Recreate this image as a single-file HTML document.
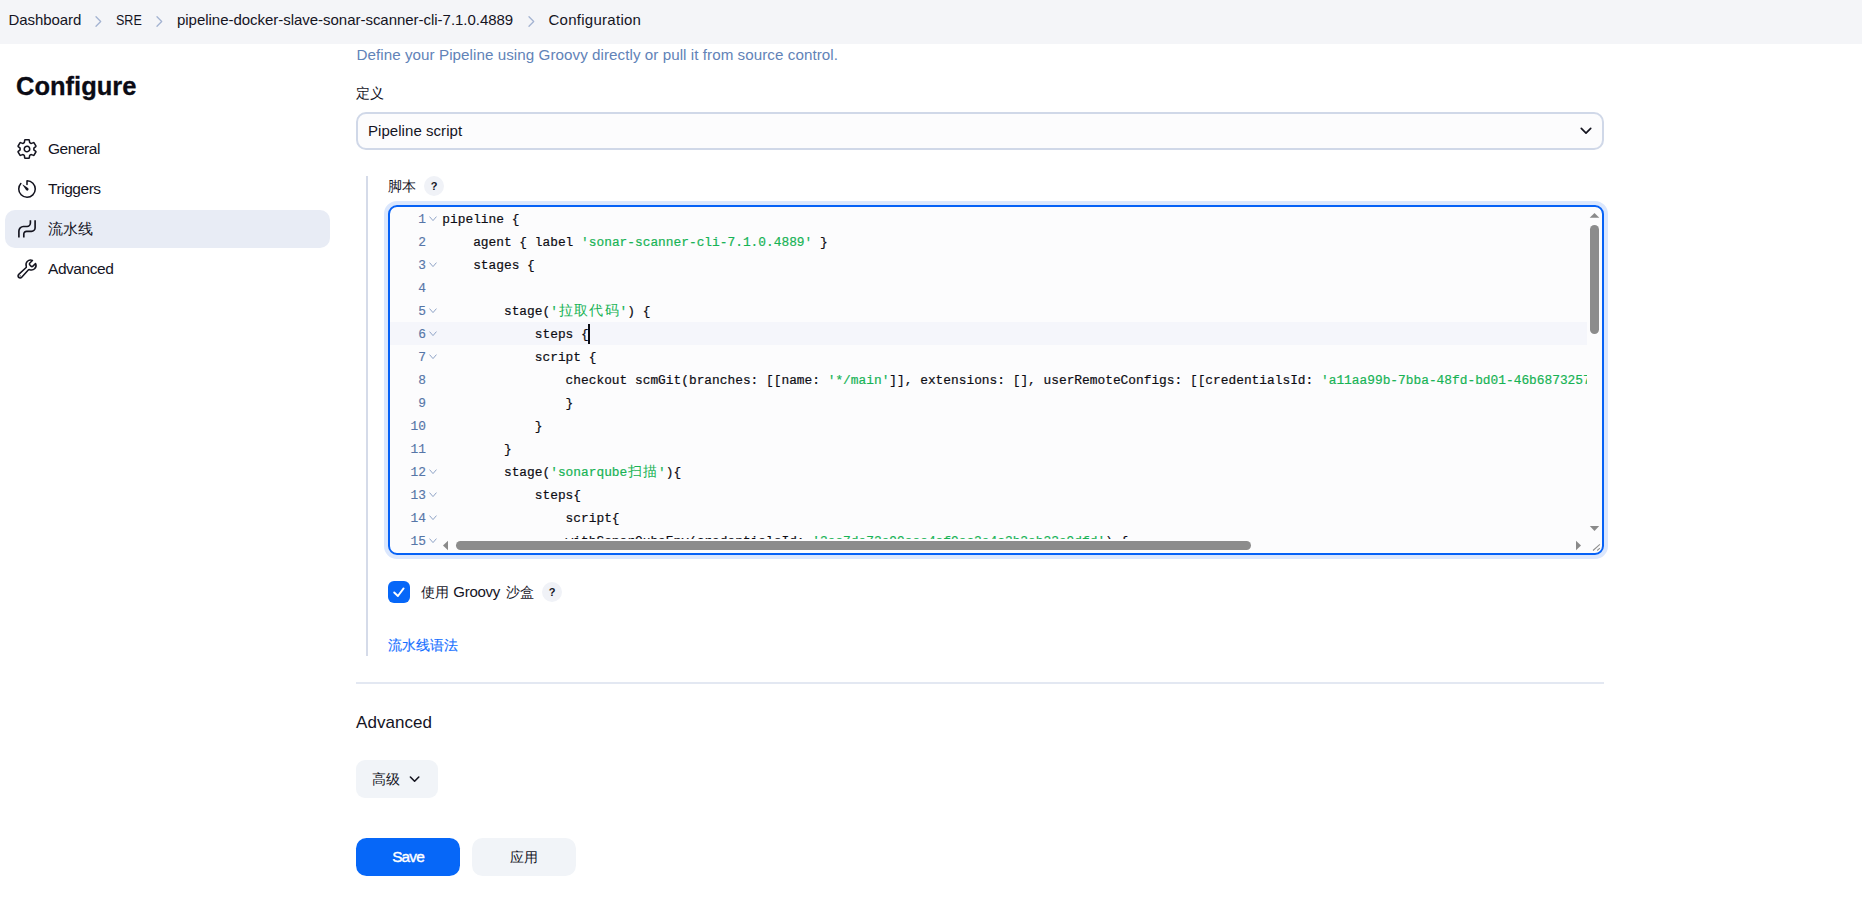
<!DOCTYPE html>
<html><head><meta charset="utf-8">
<style>
*{box-sizing:border-box;margin:0;padding:0}
html,body{width:1862px;height:900px;overflow:hidden;background:#fff;font-family:"Liberation Sans",sans-serif;color:#14141f}
.abs{position:absolute;white-space:nowrap}
#crumb{position:absolute;left:0;top:0;width:1862px;height:44px;background:#f4f5f8}
#crumb .t{position:absolute;top:0;line-height:39px;font-size:15px;color:#14141f;white-space:nowrap}
#crumb svg{position:absolute}
.side{position:absolute;left:48px;font-size:15.5px;line-height:20px;white-space:nowrap;letter-spacing:-0.45px}
.ico{position:absolute;left:16px;width:22px;height:22px}
.code{position:absolute;left:442.3px;font-family:"Liberation Mono",monospace;font-size:12.85px;line-height:23px;white-space:pre;color:#0d0d14;-webkit-text-stroke:0.2px}
.c{display:inline-block;width:15.42px;text-align:center;font-size:14px;line-height:18px;-webkit-text-stroke:0}
.ln{position:absolute;left:390px;width:36px;text-align:right;font-family:"Liberation Mono",monospace;font-size:12.85px;line-height:23px;color:#5676a8;-webkit-text-stroke:0.15px}
.s{color:#17b355}
.fold{position:absolute;left:428.5px;width:8px;height:6px}
.help{position:absolute;width:20px;height:20px;border-radius:10px;background:#f0f2f7;font-size:11px;font-weight:bold;text-align:center;line-height:20px;color:#14141f}
.cj{font-size:14px}
</style></head><body>
<div id="crumb">
 <span class="t" style="left:8.4px;letter-spacing:-0.05px">Dashboard</span>
 <svg style="left:94.4px;top:14.5px" width="9" height="13" viewBox="0 0 9 13"><path d="M2 1.8 L6.7 6.5 L2 11.2" fill="none" stroke="#a3b3d1" stroke-width="1.3" stroke-linecap="round" stroke-linejoin="round"/></svg>
 <span class="t" style="left:116px;display:inline-block;transform:scaleX(0.835);transform-origin:0 50%">SRE</span>
 <svg style="left:154.7px;top:14.5px" width="9" height="13" viewBox="0 0 9 13"><path d="M2 1.8 L6.7 6.5 L2 11.2" fill="none" stroke="#a3b3d1" stroke-width="1.3" stroke-linecap="round" stroke-linejoin="round"/></svg>
 <span class="t" style="left:177px;letter-spacing:-0.03px">pipeline-docker-slave-sonar-scanner-cli-7.1.0.4889</span>
 <svg style="left:526.7px;top:14.5px" width="9" height="13" viewBox="0 0 9 13"><path d="M2 1.8 L6.7 6.5 L2 11.2" fill="none" stroke="#a3b3d1" stroke-width="1.3" stroke-linecap="round" stroke-linejoin="round"/></svg>
 <span class="t" style="left:548.5px;letter-spacing:0.27px">Configuration</span>
</div>
<div class="abs" id="h1" style="left:16px;top:68px;font-size:25.5px;font-weight:bold;line-height:36px;color:#0b0b14;letter-spacing:0px;-webkit-text-stroke:0.3px #0b0b14">Configure</div>
<div style="position:absolute;left:5px;top:210.3px;width:325px;height:37.6px;border-radius:10px;background:#e8ecf5"></div>
<svg class="ico" style="top:138px" viewBox="0 0 512 512"><path d="M262.29 192.31a64 64 0 1057.4 57.4 64.13 64.13 0 00-57.4-57.4zM416.39 256a154.34 154.34 0 01-1.53 20.79l45.21 35.46a10.81 10.81 0 012.45 13.75l-42.77 74a10.81 10.81 0 01-13.14 4.59l-44.9-18.08a16.11 16.11 0 00-15.17 1.75A164.48 164.48 0 01325 400.8a15.94 15.94 0 00-8.82 12.14l-6.73 47.89a11.08 11.08 0 01-10.68 9.17h-85.54a11.11 11.11 0 01-10.69-8.87l-6.72-47.82a16.07 16.07 0 00-9-12.22 155.3 155.3 0 01-21.46-12.57 16 16 0 00-15.11-1.71l-44.89 18.07a10.81 10.81 0 01-13.14-4.58l-42.77-74a10.8 10.8 0 012.45-13.75l38.21-30a16.05 16.05 0 006-14.08c-.36-4.17-.58-8.33-.58-12.5s.21-8.27.58-12.35a16 16 0 00-6.07-13.94l-38.19-30A10.81 10.81 0 0149.48 186l42.77-74a10.81 10.81 0 0113.14-4.59l44.9 18.08a16.11 16.11 0 0015.17-1.75A164.48 164.48 0 01187 111.2a15.94 15.94 0 008.82-12.14l6.73-47.89A11.08 11.08 0 01213.23 42h85.54a11.11 11.11 0 0110.69 8.87l6.72 47.82a16.07 16.07 0 009 12.22 155.3 155.3 0 0121.46 12.57 16 16 0 0015.11 1.71l44.89-18.07a10.81 10.81 0 0113.14 4.58l42.77 74a10.8 10.8 0 01-2.45 13.75l-38.21 30a16.05 16.05 0 00-6.05 14.08c.33 4.14.55 8.3.55 12.47z" fill="none" stroke="#14141f" stroke-width="36" stroke-linecap="round" stroke-linejoin="round"/></svg>
<svg class="ico" style="top:178px" viewBox="0 0 512 512"><path d="M112.91 128A191.85 191.85 0 0064 254c-1.18 106.35 85.65 193.8 192 194 106.2.2 192-85.83 192-192 0-104.54-83.55-189.61-187.5-192a4.36 4.36 0 00-4.5 4.37V152" fill="none" stroke="#14141f" stroke-width="36" stroke-linecap="round" stroke-linejoin="round"/><path d="M233.38 278.63l-79-113a8.13 8.13 0 0111.32-11.32l113 79a32.5 32.5 0 01-37.25 53.26 33.21 33.21 0 01-8.07-7.94z" fill="#14141f"/></svg>
<svg class="ico" style="top:218px" viewBox="0 0 22 22"><path d="M2.9 19.6 V13 a4.5 4.5 0 0 1 4.5 -4.5 H11 a3.4 3.4 0 0 0 3.4 -3.4 V2.2" fill="none" stroke="#14141f" stroke-width="1.65"/><path d="M7.8 19.6 V16 a2.7 2.7 0 0 1 2.7 -2.7 H15.5 a3.6 3.6 0 0 0 3.6 -3.6 V2.2" fill="none" stroke="#14141f" stroke-width="1.65"/></svg>
<svg class="ico" style="top:258px" viewBox="0 0 512 512"><path d="M393.87 190a32.1 32.1 0 01-45.25 0l-26.57-26.57a32.09 32.09 0 010-45.26L382.19 58a1 1 0 00-.3-1.64c-38.82-16.64-89.15-8.16-121.11 23.57-30.58 30.35-32.32 76-21.12 115.84a31.93 31.93 0 01-9.06 32.08L64 380a48.17 48.17 0 1068 68l153.86-167a31.93 31.93 0 0131.6-9.13c39.54 10.59 84.54 8.6 114.72-21.19 32.49-32 39.5-88.56 23.75-120.93a1 1 0 00-1.6-.26z" fill="none" stroke="#14141f" stroke-width="36" stroke-linecap="round" stroke-linejoin="round"/><circle cx="96" cy="416" r="16" fill="#14141f"/></svg>
<div class="side" style="top:139px">General</div>
<div class="side" style="top:179px">Triggers</div>
<div class="side" style="top:219px;letter-spacing:0;font-size:14.5px">流水线</div>
<div class="side" style="top:259px">Advanced</div>
<div class="abs" id="desc" style="left:356.5px;top:44.7px;font-size:15.2px;line-height:20px;color:#6283b8;letter-spacing:0.05px">Define your Pipeline using Groovy directly or pull it from source control.</div>
<div class="abs cj" style="left:356px;top:83px;line-height:20px">定义</div>
<div style="position:absolute;left:356px;top:112px;width:1248px;height:37.5px;border:2px solid #d0d8e8;border-radius:10px;background:#fcfcfd"></div>
<div class="abs" id="sel" style="left:368px;top:121px;font-size:15px;line-height:20px;letter-spacing:0.05px">Pipeline script</div>
<svg class="abs" style="left:1578.5px;top:125.5px" width="14" height="10" viewBox="0 0 14 10"><path d="M2.3 2.4 L7 7.1 L11.7 2.4" fill="none" stroke="#14141f" stroke-width="1.7" stroke-linecap="round" stroke-linejoin="round"/></svg>

<div style="position:absolute;left:366px;top:176px;width:2px;height:479.7px;background:#d5dbe9"></div>
<div class="abs cj" style="left:388px;top:176px;line-height:20px">脚本</div>
<div class="help" style="left:424px;top:176px">?</div>
<div id="ed" style="position:absolute;left:388px;top:205px;width:1216px;height:350px;border-radius:9px;background:#fcfcfd"></div>
<div style="position:absolute;left:390px;top:322px;width:1197px;height:23px;background:#f5f6fb"></div>
<div class="ln" style="top:208px">1</div>
<svg class="fold" style="top:215.5px" viewBox="0 0 8 6"><path d="M0.8 0.9 L4 4.6 L7.2 0.9" fill="none" stroke="#8fa3c6" stroke-width="1" stroke-linecap="round" stroke-linejoin="round"/></svg>
<div class="code" style="top:208px">pipeline {</div>
<div class="ln" style="top:231px">2</div>
<div class="code" style="top:231px">    agent { label <span class="s">'sonar-scanner-cli-7.1.0.4889'</span> }</div>
<div class="ln" style="top:254px">3</div>
<svg class="fold" style="top:261.5px" viewBox="0 0 8 6"><path d="M0.8 0.9 L4 4.6 L7.2 0.9" fill="none" stroke="#8fa3c6" stroke-width="1" stroke-linecap="round" stroke-linejoin="round"/></svg>
<div class="code" style="top:254px">    stages {</div>
<div class="ln" style="top:277px">4</div>
<div class="code" style="top:277px"></div>
<div class="ln" style="top:300px">5</div>
<svg class="fold" style="top:307.5px" viewBox="0 0 8 6"><path d="M0.8 0.9 L4 4.6 L7.2 0.9" fill="none" stroke="#8fa3c6" stroke-width="1" stroke-linecap="round" stroke-linejoin="round"/></svg>
<div class="code" style="top:300px">        stage(<span class="s">'<span class="c">拉</span><span class="c">取</span><span class="c">代</span><span class="c">码</span>'</span>) {</div>
<div class="ln" style="top:323px">6</div>
<svg class="fold" style="top:330.5px" viewBox="0 0 8 6"><path d="M0.8 0.9 L4 4.6 L7.2 0.9" fill="none" stroke="#8fa3c6" stroke-width="1" stroke-linecap="round" stroke-linejoin="round"/></svg>
<div class="code" style="top:323px">            steps {</div>
<div class="ln" style="top:346px">7</div>
<svg class="fold" style="top:353.5px" viewBox="0 0 8 6"><path d="M0.8 0.9 L4 4.6 L7.2 0.9" fill="none" stroke="#8fa3c6" stroke-width="1" stroke-linecap="round" stroke-linejoin="round"/></svg>
<div class="code" style="top:346px">            script {</div>
<div class="ln" style="top:369px">8</div>
<div class="code" style="top:369px">                checkout scmGit(branches: [[name: <span class="s">'*/main'</span>]], extensions: [], userRemoteConfigs: [[credentialsId: <span class="s">'a11aa99b-7bba-48fd-bd01-46b68732577</span></div>
<div class="ln" style="top:392px">9</div>
<div class="code" style="top:392px">                }</div>
<div class="ln" style="top:415px">10</div>
<div class="code" style="top:415px">            }</div>
<div class="ln" style="top:438px">11</div>
<div class="code" style="top:438px">        }</div>
<div class="ln" style="top:461px">12</div>
<svg class="fold" style="top:468.5px" viewBox="0 0 8 6"><path d="M0.8 0.9 L4 4.6 L7.2 0.9" fill="none" stroke="#8fa3c6" stroke-width="1" stroke-linecap="round" stroke-linejoin="round"/></svg>
<div class="code" style="top:461px">        stage(<span class="s">'sonarqube<span class="c">扫</span><span class="c">描</span>'</span>){</div>
<div class="ln" style="top:484px">13</div>
<svg class="fold" style="top:491.5px" viewBox="0 0 8 6"><path d="M0.8 0.9 L4 4.6 L7.2 0.9" fill="none" stroke="#8fa3c6" stroke-width="1" stroke-linecap="round" stroke-linejoin="round"/></svg>
<div class="code" style="top:484px">            steps{</div>
<div class="ln" style="top:507px">14</div>
<svg class="fold" style="top:514.5px" viewBox="0 0 8 6"><path d="M0.8 0.9 L4 4.6 L7.2 0.9" fill="none" stroke="#8fa3c6" stroke-width="1" stroke-linecap="round" stroke-linejoin="round"/></svg>
<div class="code" style="top:507px">                script{</div>
<div class="ln" style="top:530px">15</div>
<svg class="fold" style="top:537.5px" viewBox="0 0 8 6"><path d="M0.8 0.9 L4 4.6 L7.2 0.9" fill="none" stroke="#8fa3c6" stroke-width="1" stroke-linecap="round" stroke-linejoin="round"/></svg>
<div class="code" style="top:530px">                withSonarQubeEnv(credentialsId: <span class="s">'3ea7de72e99aaa4af9ac2e4c3b2ab23e9dfd'</span>) {</div>
<div style="position:absolute;left:588px;top:324px;width:2px;height:20px;background:#0d0d14"></div>
<div style="position:absolute;left:1587px;top:207px;width:15px;height:346px;background:#fcfcfd"></div>
<div style="position:absolute;left:438px;top:539px;width:1164px;height:14px;background:#fcfcfd"></div>
<div style="position:absolute;left:1604px;top:196px;width:258px;height:368px;background:#fff"></div>
<svg class="abs" style="left:1586px;top:207px" width="16" height="346" viewBox="0 0 16 346">
<path d="M3.7 10.8 L8.5 5.9 L13.3 10.8 Z" fill="#8a8a8a"/>
<rect x="4" y="18" width="9" height="109" rx="4.5" fill="#8c8c8c"/>
<path d="M3.8 319 L13.2 319 L8.5 324 Z" fill="#8a8a8a"/>
<path d="M7 343.5 L13.9 337.3 M11.2 343.5 L13.9 341.2" stroke="#8f8f8f" stroke-width="1.05" fill="none"/>
</svg>
<svg class="abs" style="left:438px;top:539px" width="1148" height="14" viewBox="0 0 1148 14">
<path d="M10 1.8 L5 6.5 L10 11.2 Z" fill="#8a8a8a"/>
<rect x="18" y="2" width="795" height="9" rx="4.5" fill="#8c8c8c"/>
<path d="M1138 1.8 L1143 6.5 L1138 11.2 Z" fill="#8a8a8a"/>
</svg>
<div style="position:absolute;left:384px;top:201px;width:1224px;height:358px;border:4px solid #dbe7fd;border-radius:13px"></div>
<div style="position:absolute;left:388px;top:205px;width:1216px;height:350px;border:2px solid #0561f6;border-radius:9px"></div>
<div style="position:absolute;left:388px;top:581px;width:22px;height:22px;border-radius:6px;background:#0667f8"></div>
<svg class="abs" style="left:388px;top:581px" width="22" height="22" viewBox="0 0 22 22"><path d="M6.2 11.5 L9.9 15 L15.6 7.4" fill="none" stroke="#fff" stroke-width="1.9" stroke-linecap="round" stroke-linejoin="round"/></svg>
<div class="abs cj" style="left:421px;top:582px;line-height:20px">使用</div>
<div class="abs" id="groovy" style="left:453.3px;top:582px;font-size:15px;line-height:20px;letter-spacing:-0.28px">Groovy</div>
<div class="abs cj" style="left:506px;top:582px;line-height:20px">沙盒</div>
<div class="help" style="left:542px;top:582px">?</div>
<div class="abs cj" style="left:388px;top:635px;line-height:20px;color:#1670ff;-webkit-text-stroke:0.15px">流水线语法</div>

<div style="position:absolute;left:356px;top:682px;width:1248px;height:2px;background:#e3e8f2"></div>
<div class="abs" id="adv" style="left:356px;top:710.6px;font-size:17px;line-height:24px;color:#14141f;letter-spacing:0.05px">Advanced</div>

<div style="position:absolute;left:356px;top:760.4px;width:81.7px;height:37.4px;border-radius:9px;background:#f1f4f8"></div>
<div class="abs cj" style="left:372px;top:769px;line-height:20px">高级</div>
<svg class="abs" style="left:407.8px;top:774px" width="13" height="10" viewBox="0 0 13 10"><path d="M2.4 3 L6.6 7.2 L10.8 3" fill="none" stroke="#14141f" stroke-width="1.6" stroke-linecap="round" stroke-linejoin="round"/></svg>

<div style="position:absolute;left:356px;top:838px;width:104px;height:38px;border-radius:10.5px;background:#0667f8"></div>
<div class="abs" id="save" style="left:392.2px;top:847px;font-size:15.4px;line-height:20px;color:#fff;letter-spacing:-0.85px;-webkit-text-stroke:0.4px #fff">Save</div>
<div style="position:absolute;left:472.4px;top:838px;width:103.4px;height:38px;border-radius:10.5px;background:#f1f4f8"></div>
<div class="abs cj" style="left:510px;top:847px;line-height:20px">应用</div>
</body></html>
